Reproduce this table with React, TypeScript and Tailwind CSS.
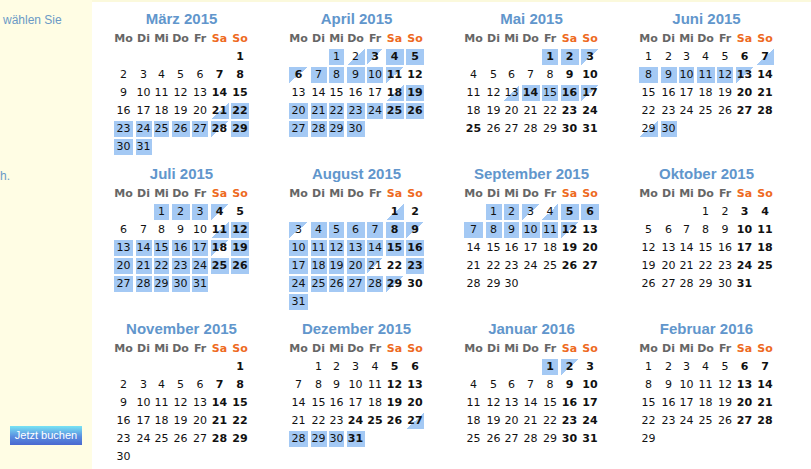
import React from "react";

type MonthDef = {
  name: string;
  offset: number;
  days: number;
  full: number[];
  a: number[];
  d: number[];
  hol: number[];
};

const r = (a: number, b: number) => {
  const out: number[] = [];
  for (let i = a; i <= b; i++) out.push(i);
  return out;
};

const months: MonthDef[] = [
  { name: "März 2015", offset: 6, days: 31, full: [...r(22, 27), ...r(29, 31)], a: [21], d: [28], hol: [] },
  { name: "April 2015", offset: 2, days: 30, full: [1, 4, 5, ...r(7, 10), ...r(19, 30)], a: [2, 18], d: [3, 6, 11], hol: [3, 6] },
  { name: "Mai 2015", offset: 4, days: 31, full: [1, 2, 14, 15, 16], a: [13], d: [3, 17], hol: [1, 14, 25] },
  { name: "Juni 2015", offset: 0, days: 30, full: [...r(8, 12), 30], a: [7, 29], d: [13], hol: [] },
  { name: "Juli 2015", offset: 2, days: 31, full: [1, 2, 3, 12, ...r(13, 17), ...r(19, 31)], a: [11], d: [4, 18], hol: [] },
  { name: "August 2015", offset: 5, days: 31, full: [...r(4, 8), ...r(10, 20), ...r(23, 28), 31], a: [1], d: [3, 9, 21, 29], hol: [] },
  { name: "September 2015", offset: 1, days: 30, full: [1, 2, 5, 6, ...r(7, 11)], a: [4], d: [3, 12], hol: [] },
  { name: "Oktober 2015", offset: 3, days: 31, full: [], a: [], d: [], hol: [] },
  { name: "November 2015", offset: 6, days: 30, full: [], a: [], d: [], hol: [] },
  { name: "Dezember 2015", offset: 1, days: 31, full: [28, 29, 30, 31], a: [27], d: [], hol: [24, 25, 31] },
  { name: "Januar 2016", offset: 4, days: 31, full: [1], a: [], d: [2], hol: [1] },
  { name: "Februar 2016", offset: 0, days: 29, full: [], a: [], d: [], hol: [] },
];

const heads = ["Mo", "Di", "Mi", "Do", "Fr", "Sa", "So"];

function Month({ m }: { m: MonthDef }) {
  const cells: React.ReactNode[] = [];
  for (let i = 0; i < m.offset; i++) cells.push(<div key={"e" + i} />);
  for (let day = 1; day <= m.days; day++) {
    const col = (m.offset + day - 1) % 7;
    const bold = col >= 5 || m.hol.includes(day);
    let bg = "";
    if (m.full.includes(day)) bg = "bg-[#a4c9f4]";
    else if (m.a.includes(day))
      bg = "bg-[linear-gradient(to_bottom_right,transparent_50%,#a4c9f4_50%)]";
    else if (m.d.includes(day))
      bg = "bg-[linear-gradient(to_bottom_right,#a4c9f4_50%,transparent_50%)]";
    cells.push(
      <div
        key={day}
        className={`h-[16px] leading-[16px] text-center text-[11px] text-[#111] ${bold ? "font-bold" : ""} ${bg}`}
      >
        {day}
      </div>
    );
  }
  return (
    <div className="h-[155px] pt-[8px] flex flex-col items-center">
      <div className="h-[21px] leading-[21px] text-[15px] font-bold text-[#6196cc] font-['Liberation_Sans',Arial,sans-serif]">
        {m.name}
      </div>
      <div className="mt-[2px] grid grid-cols-[19px_16px_15px_18px_16px_18px_18px] gap-x-[2.5px] gap-y-[2px] auto-rows-[16px] font-['DejaVu_Sans',Verdana,sans-serif]">
        {heads.map((h, i) => (
          <div
            key={h}
            className={`h-[16px] leading-[16px] text-center text-[11px] font-bold whitespace-nowrap ${i >= 5 ? "text-[#ee6a22]" : "text-[#666666]"}`}
          >
            {h}
          </div>
        ))}
        {cells}
      </div>
    </div>
  );
}

export default function App() {
  return (
    <div className="flex w-[811px] h-[469px] overflow-hidden bg-white">
      <aside className="w-[92px] shrink-0 bg-[#fffde4] flex flex-col font-['Liberation_Sans',Arial,sans-serif]">
        <div className="pt-[13px] pl-[3px] text-[12px] leading-[14px] text-[#6b9ac6] whitespace-nowrap">
          wählen Sie
        </div>
        <div className="mt-[142px] text-[12px] leading-[14px] text-[#6b9ac6]">h.</div>
        <button className="mt-[243px] ml-[10px] w-[72px] h-[19px] text-[11px] leading-[19px] text-white text-center bg-[linear-gradient(to_bottom,#78e4f4,#5a8ee0_55%,#4a68d0)]">
          Jetzt buchen
        </button>
      </aside>
      <main className="flex-1 pl-[2px] shadow-[inset_0_2px_0_#fbf9dc]">
        <div className="grid grid-cols-[repeat(4,175px)]">
          {months.map((m) => (
            <Month key={m.name} m={m} />
          ))}
        </div>
      </main>
    </div>
  );
}
